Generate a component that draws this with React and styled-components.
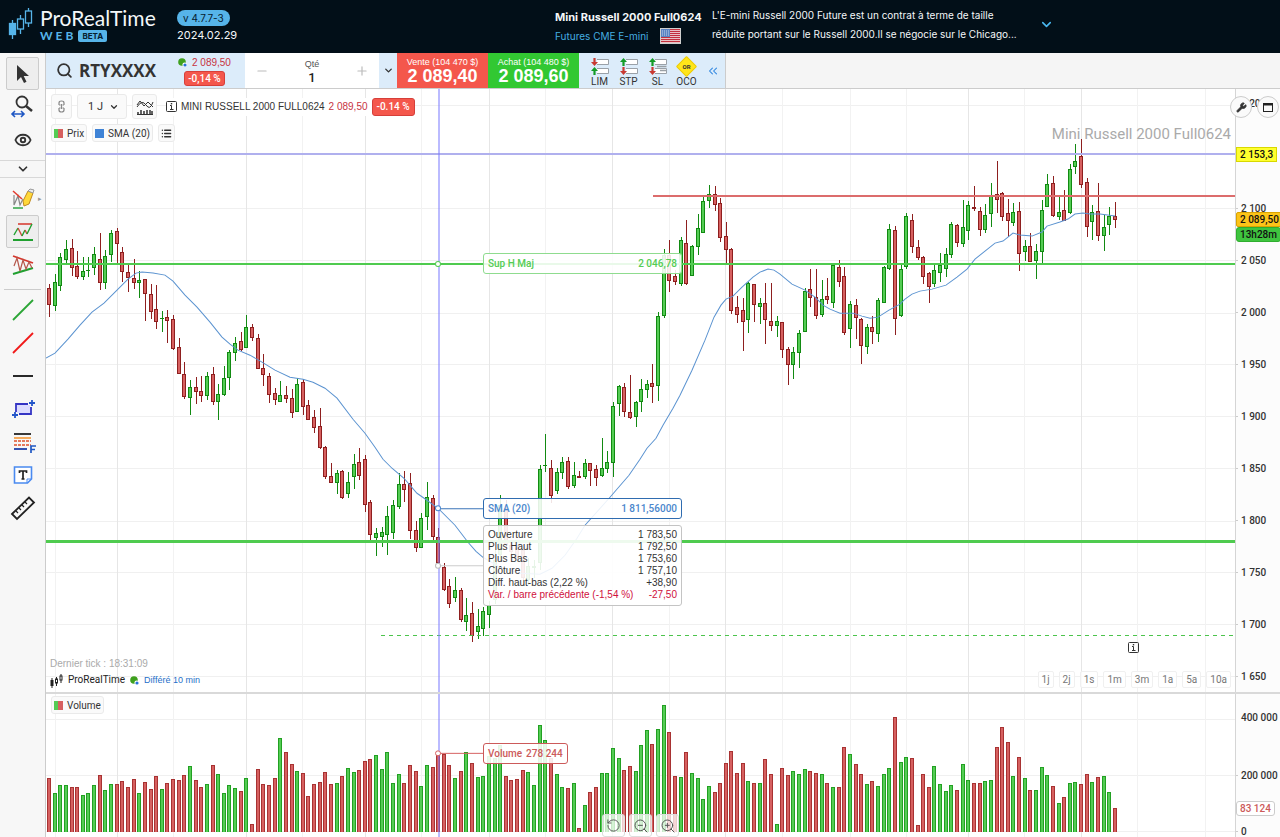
import React from 'react';
import styled, { createGlobalStyle } from 'styled-components';
import { Search, ChevronDown, ChevronsLeft, Eye, Minus, Plus, Wrench, ZoomIn, ZoomOut, RotateCcw, List } from 'lucide-react';

const GREEN = '#54cc54';
const GREEN_DARK = '#128a12';
const RED = '#d66060';
const RED_DARK = '#8e1f1f';

const GlobalStyle = createGlobalStyle`
    * { box-sizing: border-box; }
    body {
        margin: 0;
        background: #fff;
        color: #333;
        font-family: "Liberation Sans", sans-serif;
        font-size: 11px;
    }
    button, input, select {
        font: inherit;
        color: inherit;
        margin: 0;
        padding: 0;
        border: 0;
        background: none;
    }
    svg { display: block; flex-shrink: 0; }
`;

/* [rising, high, body top, body bottom, low, volume top] */
const bars = [
    [0, 284, 288, 305, 317, 778], [1, 274, 282, 306, 311, 793], [1, 253, 257, 286, 291, 785], [1, 240, 249, 260, 263, 785],
    [0, 239, 248, 268, 276, 787], [0, 251, 266, 277, 279, 787], [1, 257, 271, 277, 280, 795], [1, 257, 270, 271, 277, 793],
    [1, 247, 254, 268, 275, 785], [0, 233, 259, 283, 290, 775], [1, 250, 256, 283, 289, 790], [1, 230, 233, 255, 262, 784],
    [0, 228, 231, 244, 263, 784], [0, 247, 252, 272, 282, 781], [0, 264, 272, 278, 292, 787], [0, 259, 278, 283, 289, 779],
    [1, 271, 280, 283, 298, 793], [0, 279, 279, 294, 321, 782], [0, 284, 294, 312, 319, 789], [0, 285, 309, 322, 329, 776],
    [1, 311, 318, 319, 332, 789], [0, 310, 317, 321, 343, 783], [0, 315, 319, 349, 350, 779], [0, 338, 347, 374, 374, 780],
    [0, 362, 374, 397, 399, 775], [1, 380, 387, 398, 415, 766], [0, 377, 387, 392, 404, 780], [0, 376, 391, 396, 402, 787],
    [1, 372, 376, 396, 400, 784], [0, 367, 374, 402, 405, 765], [1, 384, 394, 402, 420, 774], [1, 366, 378, 395, 396, 793],
    [1, 350, 352, 378, 390, 785], [1, 337, 343, 353, 361, 788], [0, 332, 341, 350, 351, 791], [1, 315, 327, 348, 348, 778],
    [0, 324, 327, 338, 341, 824], [0, 334, 338, 369, 369, 769], [0, 354, 368, 375, 386, 784], [0, 373, 376, 395, 403, 785],
    [0, 388, 393, 400, 405, 778], [1, 381, 395, 402, 402, 738], [0, 386, 395, 399, 403, 752], [0, 389, 398, 413, 418, 764],
    [1, 378, 384, 412, 412, 771], [0, 379, 382, 407, 415, 773], [0, 400, 405, 420, 420, 796], [0, 410, 417, 428, 433, 784],
    [0, 408, 426, 448, 449, 782], [0, 446, 447, 477, 479, 772], [0, 463, 476, 483, 483, 784], [1, 470, 473, 483, 494, 783],
    [0, 470, 471, 498, 499, 776], [1, 472, 482, 494, 498, 768], [1, 454, 464, 477, 489, 772], [0, 448, 462, 476, 480, 770],
    [0, 455, 459, 505, 512, 761], [0, 500, 502, 535, 541, 759], [1, 528, 533, 538, 556, 755], [1, 527, 532, 537, 547, 769],
    [1, 506, 516, 535, 555, 752], [1, 500, 505, 533, 539, 783], [1, 473, 484, 507, 509, 774], [0, 471, 484, 490, 502, 783],
    [0, 473, 483, 531, 539, 765], [0, 521, 530, 548, 552, 771], [1, 513, 518, 548, 548, 786], [1, 482, 497, 517, 530, 765],
    [0, 495, 498, 537, 540, 767], [0, 528, 537, 563, 567, 753], [0, 563, 567, 590, 591, 754], [0, 579, 586, 604, 608, 765],
    [1, 577, 590, 598, 602, 778], [0, 588, 590, 620, 622, 771], [1, 598, 615, 622, 631, 752], [0, 602, 613, 636, 642, 763],
    [1, 609, 626, 632, 639, 777], [1, 607, 611, 629, 636, 776], [1, 601, 605, 615, 628, 756], [1, 550, 560, 600, 604, 758],
    [1, 495, 505, 555, 560, 745], [0, 500, 508, 545, 550, 776], [0, 540, 545, 552, 556, 780], [0, 545, 548, 558, 562, 779],
    [0, 545, 550, 578, 585, 770], [1, 558, 566, 580, 585, 772], [1, 560, 566, 568, 578, 785], [1, 465, 469, 563, 570, 725],
    [1, 434, 465, 466, 472, 740], [0, 460, 468, 496, 503, 758], [1, 468, 472, 491, 494, 774], [1, 457, 462, 473, 479, 787],
    [0, 457, 461, 487, 489, 788], [1, 462, 475, 486, 488, 783], [0, 471, 476, 478, 478, 828], [1, 459, 463, 477, 479, 805],
    [0, 463, 463, 471, 486, 792], [0, 465, 469, 478, 486, 787], [1, 438, 468, 476, 477, 773], [1, 451, 462, 469, 473, 773],
    [1, 402, 406, 463, 477, 748], [1, 385, 386, 404, 416, 758], [0, 383, 387, 412, 417, 770], [0, 375, 412, 418, 419, 766],
    [1, 401, 402, 417, 427, 771], [1, 379, 389, 402, 412, 745], [1, 380, 384, 390, 398, 730], [0, 364, 383, 387, 403, 744],
    [1, 312, 316, 386, 401, 729], [1, 249, 255, 316, 318, 705], [0, 240, 255, 281, 292, 732], [0, 270, 276, 282, 285, 776],
    [1, 237, 240, 284, 286, 777], [0, 220, 243, 284, 285, 752], [1, 245, 246, 276, 276, 773], [1, 214, 228, 247, 255, 778],
    [1, 196, 201, 233, 233, 799], [1, 185, 194, 201, 208, 786], [0, 186, 194, 205, 211, 792], [0, 198, 203, 238, 242, 783],
    [0, 222, 236, 250, 263, 763], [0, 248, 249, 311, 314, 751], [0, 296, 307, 315, 323, 773], [0, 298, 310, 322, 351, 763],
    [1, 282, 283, 320, 333, 781], [0, 284, 284, 305, 322, 783], [1, 298, 303, 307, 324, 783], [0, 283, 303, 320, 344, 759],
    [0, 283, 321, 326, 331, 774], [1, 316, 321, 326, 337, 824], [0, 322, 322, 350, 358, 768], [0, 347, 349, 365, 385, 775],
    [1, 347, 352, 365, 379, 771], [1, 330, 333, 353, 368, 774], [1, 288, 291, 332, 332, 769], [0, 269, 289, 298, 307, 771],
    [0, 269, 297, 316, 319, 773], [1, 280, 299, 315, 317, 774], [0, 278, 296, 300, 304, 783], [1, 264, 265, 303, 308, 787],
    [0, 260, 267, 282, 287, 787], [0, 267, 276, 333, 335, 747], [1, 301, 304, 329, 348, 754], [0, 299, 305, 318, 339, 764],
    [0, 318, 319, 346, 364, 774], [1, 324, 327, 347, 354, 784], [0, 316, 327, 332, 344, 781], [1, 298, 300, 334, 342, 786],
    [1, 266, 267, 303, 303, 774], [1, 224, 229, 269, 270, 768], [0, 226, 230, 319, 335, 717], [1, 263, 269, 316, 317, 762],
    [1, 213, 216, 267, 269, 757], [0, 214, 220, 247, 253, 758], [0, 240, 247, 258, 260, 825], [0, 256, 257, 277, 284, 774],
    [0, 272, 273, 287, 303, 787], [1, 264, 270, 284, 287, 766], [1, 253, 265, 273, 282, 784], [1, 248, 254, 269, 277, 791],
    [1, 222, 224, 255, 258, 785], [0, 224, 225, 243, 247, 790], [1, 200, 227, 244, 247, 764], [1, 201, 205, 231, 240, 780],
    [0, 186, 207, 209, 211, 783], [0, 207, 211, 230, 236, 783], [1, 204, 215, 230, 233, 781], [1, 183, 196, 214, 227, 780],
    [0, 161, 194, 200, 213, 747], [0, 192, 193, 217, 221, 727], [0, 199, 213, 221, 237, 742], [1, 203, 212, 223, 226, 776],
    [0, 202, 211, 254, 271, 757], [1, 240, 246, 252, 261, 778], [0, 233, 246, 262, 262, 790], [1, 244, 251, 261, 279, 790],
    [1, 200, 210, 252, 263, 767], [1, 174, 184, 207, 207, 775], [0, 176, 183, 216, 217, 786], [1, 197, 212, 217, 220, 803],
    [0, 190, 210, 221, 221, 797], [1, 164, 169, 213, 214, 783], [1, 144, 161, 167, 174, 782], [0, 139, 156, 185, 188, 784],
    [0, 178, 182, 227, 237, 774], [1, 205, 212, 222, 240, 782], [0, 183, 211, 236, 241, 777], [1, 215, 227, 236, 251, 776],
    [1, 207, 216, 225, 235, 792], [0, 202, 216, 220, 228, 808],
];

const sma = '46,358 55,353 68,339 80,325 92,312 104,303 116,291 128,279 136,273 142,272 153,273 165,275 173,281 185,295 197,307 210,322 222,337 230,344 238,350 250,355 262,362 275,370 290,377 303,379 313,382 325,388 337,398 353,419 365,433 375,447 383,459 392,468 404,478 417,493 427,500 438,508 455,525 468,542 476,551 483,557 500,567 520,573 540,574 552,568 565,555 577,538 585,525 610,497 629,475 640,459 647,448 656,438 663,425 673,408 680,395 692,370 705,340 714,317 721,305 726,299 733,296 742,287 753,277 760,272 768,269 774,270 780,274 792,284 805,290 815,297 823,305 830,309 840,313 853,313 862,316 870,318 878,317 889,310 900,304 905,299 912,294 920,291 932,289 946,285 957,277 967,269 975,259 985,251 995,243 1003,241 1013,233 1020,235 1032,236 1042,232 1047,226 1060,222 1068,219 1075,214 1083,213 1090,214 1100,214 1115,216';

const gridX = [55, 117, 173, 246, 302, 365, 421, 489, 545, 612, 669, 725, 782, 850, 906, 968, 1024, 1081, 1137, 1205];
const gridStrong = [117, 246, 365, 489, 612, 725, 968, 1081];
const priceGrid = [105, 208, 260, 313, 364, 416, 468, 521, 572, 624, 676];
const volumeGrid = [719, 775, 831];
// the 2 150 label makes room for the alert tag
const prices = ['', '2 100', '2 050', '2 000', '1 950', '1 900', '1 850', '1 800', '1 750', '1 700', '1 650'];

const barX = (i) => Math.round(49 + 5.64 * i);

const Page = styled.div`
    display: flex;
    flex-direction: column;
    height: 100vh;
    overflow: hidden;
`

const Header = styled.header`
    display: flex;
    align-items: center;
    height: 53px;
    flex-shrink: 0;
    background: #020f18;
    color: #f4f7f9;
    font-family: Inter, sans-serif;
`

const Brand = styled.div`
    display: flex;
    align-items: center;
    width: 177px;
    padding: 0 0 6px 8px;
    gap: 6px;
`

const BrandName = styled.div`
    font-family: Lato, sans-serif;
    font-size: 21px;
    line-height: 25px;
`

const BrandSub = styled.div`
    display: flex;
    align-items: center;
    gap: 2px;
    color: #56b4e9;
    font-family: Lato, sans-serif;
    font-size: 12px;
    font-weight: 700;
    line-height: 12px;
    letter-spacing: 3px;
`

const Beta = styled.span`
    padding: 0 4px;
    border-radius: 2px;
    background: #56b4e9;
    color: #06202f;
    font-family: Inter, sans-serif;
    font-size: 8px;
    letter-spacing: 0;
`

const Version = styled.div`
    display: flex;
    flex-direction: column;
    align-items: flex-start;
    width: 378px;
    font-size: 11px;
    line-height: 18px;
`

const VersionTag = styled.span`
    padding: 0 6px;
    border-radius: 8px;
    background: #56b4e9;
    color: #06202f;
    font-size: 10px;
    line-height: 16px;
`

const Instrument = styled.div`
    width: 157px;
    line-height: 19px;
    white-space: nowrap;
`

const InstrumentName = styled.div`
    font-family: Inter, sans-serif;
    font-size: 11px;
    font-weight: 700;
`

const Market = styled.div`
    display: flex;
    align-items: center;
    gap: 12px;
    color: #45aee0;
    font-size: 10px;
`

const Description = styled.p`
    width: 327px;
    margin: 0 0 4px;
    font-size: 10px;
    line-height: 19px;
    white-space: nowrap;
`

const HeaderToggle = styled.button`
    display: flex;
    padding-bottom: 4px;
    color: #4ab8f0;
`

const Body = styled.div`
    display: flex;
    flex: 1;
    min-height: 0;
`

const Sidebar = styled.nav`
    display: flex;
    flex-direction: column;
    align-items: center;
    width: 46px;
    flex-shrink: 0;
    padding-top: 4px;
    border-right: 1px solid #ccc;
    background: #f7f7f7;
`

const Tool = styled.button`
    position: relative;
    display: flex;
    align-items: center;
    justify-content: center;
    width: 33px;
    height: 33px;
    flex-shrink: 0;
    border: 1px solid ${props => props.$active ? '#ccc' : 'transparent'};
    border-radius: 2px;
    background: ${props => props.$active ? '#eee' : 'transparent'};
`

const MoreTools = styled.button`
    display: flex;
    align-items: center;
    justify-content: center;
    width: 100%;
    height: 18px;
    margin: 4px 0;
    border-top: 1px solid #d8d8d8;
    border-bottom: 1px solid #d8d8d8;
`

const Flyout = styled.span`
    position: absolute;
    right: -4px;
    color: #999;
    font-size: 7px;
`

const Separator = styled.hr`
    width: 37px;
    margin: 8px 0 3px;
    border: 0;
    border-top: 1px solid #ccc;
`

const Main = styled.main`
    display: flex;
    flex-direction: column;
    flex: 1;
    min-width: 0;
`

const Toolbar = styled.div`
    display: flex;
    height: 36px;
    flex-shrink: 0;
    border-bottom: 1px solid #ccc;
    background: #f5f5f5;
`

const SymbolBox = styled.label`
    display: flex;
    align-items: center;
    gap: 6px;
    width: 199px;
    padding: 0 12px 0 10px;
    background: #dcecfa;
`

const SymbolInput = styled.input`
    width: 93px;
    font-family: "Open Sans", sans-serif;
    font-size: 17px;
    font-weight: 700;
    outline: none;
`

const QuoteBox = styled.div`
    display: flex;
    flex-direction: column;
    align-items: center;
    gap: 1px;
    color: #c7333f;
    font-size: 10px;
    line-height: 14px;
`

const QuoteLine = styled.div`
    display: flex;
    align-items: center;
    gap: 5px;
    white-space: nowrap;
`

const Change = styled.span`
    padding: 0 ${props => props.$large ? 4 : 3}px;
    border: 1px solid #d63f3a;
    border-radius: 3px;
    background: #f4574c;
    color: #fff;
    font-family: Roboto, sans-serif;
    font-size: 10px;
    font-weight: 500;
    line-height: ${props => props.$large ? 16 : 13}px;
    white-space: nowrap;
`

const Quantity = styled.div`
    display: flex;
    align-items: center;
    justify-content: space-between;
    width: 134px;
    padding: 0 10px;
    background: #fff;
    color: #bbb;
`

const QuantityField = styled.label`
    display: flex;
    flex-direction: column;
    align-items: center;
    color: #555;
    font-size: 9px;
    line-height: 14px;
`

const QuantityInput = styled.input`
    width: 60px;
    color: #222;
    font-family: Roboto, sans-serif;
    font-size: 13px;
    font-weight: 500;
    text-align: center;
    outline: none;
`

const DropButton = styled.button`
    display: flex;
    align-items: center;
    justify-content: center;
    width: 18px;
    background: #dcecfa;
`

const OrderButton = styled.button`
    width: 91px;
    background: ${props => props.$buy ? '#32c832' : '#f4574c'};
    color: #fff;
    font-size: 9px;
    line-height: 12px;
    white-space: nowrap;
`

const OrderPrice = styled.span`
    display: block;
    font-size: 18px;
    font-weight: 700;
    line-height: 17px;
`

const OrderTypes = styled.div`
    display: flex;
    align-items: center;
    width: 147px;
    padding-left: 6px;
    border-right: 1px solid #ccc;
    background: #dcecfa;
`

const OrderType = styled.button`
    display: flex;
    flex-direction: column;
    align-items: center;
    justify-content: flex-end;
    width: 29px;
    height: 34px;
    font-family: Roboto, sans-serif;
    font-size: 10px;
    line-height: 12px;
`

const Collapse = styled.button`
    display: flex;
    margin-left: 5px;
    color: #2f86e0;
`

const Pane = styled.section`
    display: flex;
    flex: ${props => props.$grow} 0 0;
    min-height: 0;
    border-bottom: ${props => props.$last ? '0' : '2px solid #d9d9d9'};
`

const Plot = styled.div`
    position: relative;
    flex: 1;
    min-width: 0;
`

const Drawing = styled.svg`
    width: 100%;
    height: 100%;
`

const Axis = styled.div`
    position: relative;
    width: 45px;
    flex-shrink: 0;
    border-left: 1px solid #d5d5d5;
    background: #fcfcfc;
    font-family: Roboto, sans-serif;
    font-size: 10px;
    font-weight: 500;
    white-space: nowrap;
`

const TopTick = styled.div`
    height: ${props => props.$height}px;
    padding-left: 5px;
    line-height: ${props => props.$line}px;
`

const Tick = styled.div`
    display: flex;
    align-items: center;
    height: ${props => props.$height}px;

    &:before {
        content: '';
        width: 2px;
        margin-right: 3px;
        border-top: 1px solid #ccc;
    }
`

const PriceTag = styled.div`
    position: absolute;
    left: 0;
    top: ${props => props.$top}px;
    height: 15px;
    padding: 0 3px;
    border: 1px solid ${props => props.$border};
    border-radius: ${props => props.$round || 0}px;
    background: ${props => props.$fill};
    color: ${props => props.$ink || '#111'};
    line-height: 13px;
`

const WindowButtons = styled.div`
    position: absolute;
    top: 7px;
    right: 1px;
    display: flex;
    gap: 5px;
`

const RoundButton = styled.button`
    display: flex;
    align-items: center;
    justify-content: center;
    width: 22px;
    height: 22px;
    border: 1px solid #ccc;
    border-radius: 50%;
    background: #fafafa;
`

const ChartHead = styled.div`
    position: absolute;
    top: 5px;
    left: 5px;
    display: flex;
    flex-direction: column;
    gap: 5px;
`

const HeadRow = styled.div`
    display: flex;
    align-items: center;
    gap: ${props => props.$gap}px;
`

const HeadButton = styled.button`
    display: flex;
    align-items: center;
    justify-content: center;
    width: ${props => props.$width}px;
    height: 25px;
    border: 1px solid #eaeaea;
    border-radius: 3px;
    background: #fafafa;
`

const Timeframe = styled.label`
    position: relative;
    display: flex;
    align-items: center;
    width: 50px;
    height: 25px;
    padding-left: 10px;
    border: 1px solid #eaeaea;
    border-radius: 3px;
    background: #fafafa;

    select {
        width: 21px;
        appearance: none;
        font-family: Roboto, sans-serif;
        outline: none;
    }
`

const Title = styled.div`
    display: flex;
    align-items: center;
    gap: 4px;
    margin-left: 4px;
    background: #fff;
    font-size: 10px;
    white-space: nowrap;
`

const Legend = styled.button`
    display: flex;
    align-items: center;
    gap: 4px;
    height: 18px;
    padding: 0 2px;
    border: 1px solid #eaeaea;
    border-radius: 3px;
    background: #fafafa;
    font-family: Roboto, sans-serif;
    font-size: 10px;
`

const Swatch = styled.span`
    width: 9px;
    height: 9px;
    background: ${props => props.$right
        ? `linear-gradient(90deg, ${props.$left} 50%, ${props.$right} 50%)`
        : props.$left};
`

const Watermark = styled.div`
    position: absolute;
    top: 36px;
    right: 4px;
    color: #aaa;
    font-family: Roboto, sans-serif;
    font-size: 15px;
    line-height: 18px;
`

const Callout = styled.div`
    position: absolute;
    left: 437px;
    top: ${props => props.$top}px;
    display: flex;
    align-items: center;
    justify-content: space-between;
    gap: 4px;
    width: ${props => props.$wide ? '199px' : 'auto'};
    height: 21px;
    padding: 0 4px;
    border: 1px solid ${props => props.$line || props.$color};
    border-radius: 3px;
    background: rgba(255, 255, 255, 0.88);
    color: ${props => props.$color};
    font-family: Roboto, sans-serif;
    font-size: 10px;
    font-weight: 500;
    white-space: nowrap;
`

const Details = styled.table`
    position: absolute;
    left: 437px;
    top: 436px;
    width: 199px;
    padding: 3px 4px 4px;
    border: 1px solid #c4c4c4;
    border-radius: 3px;
    border-spacing: 0;
    background: rgba(255, 255, 255, 0.9);
    color: #333;
    font-size: 10px;
    line-height: 12px;

    th, td {
        padding: 0;
        font-weight: 400;
        text-align: left;
        white-space: nowrap;
    }
    td { text-align: right; }
    tr:last-child { color: #d0103c; }
`

const ChartFoot = styled.div`
    position: absolute;
    left: 4px;
    bottom: 4px;
    color: #1f6fc9;
    font-size: 9px;
    line-height: 16px;
`

const LastTick = styled.div`
    color: #aaa;
    font-size: 10px;
`

const FootBrand = styled.span`
    color: #222;
    font-family: Roboto, sans-serif;
    font-size: 10px;
`

const Ranges = styled.div`
    position: absolute;
    right: 4px;
    bottom: 4px;
    display: flex;
    gap: 5px;
`

const Range = styled.button`
    height: 17px;
    padding: 0 3px;
    border: 1px solid #f0f0f0;
    border-radius: 2px;
    background: rgba(255, 255, 255, 0.8);
    color: #777;
    font-family: Roboto, sans-serif;
    font-size: 10px;
`

const NewsMark = styled.button`
    position: absolute;
    left: 1082px;
    top: 553px;
`

const VolumeLegend = styled.div`
    position: absolute;
    top: 2px;
    left: 5px;
`

const ZoomBar = styled.div`
    position: absolute;
    left: 0;
    right: 0;
    bottom: 0;
    display: flex;
    justify-content: center;
    gap: 4px;
`

const ZoomButton = styled.button`
    display: flex;
    align-items: center;
    justify-content: center;
    width: 23px;
    height: 23px;
    border: 1px solid #ddd;
    border-radius: 3px;
    background: rgba(255, 255, 255, 0.75);
    color: #555;
`

function LogoCandles() {
    return (
        <svg width="26" height="33" viewBox="0 0 26 33" fill="none" stroke="#56b4e9" strokeWidth="1.3">
            <path d="M4.5 13v4M4.5 27v5M12.5 8v4M12.5 22v5M20.500 1v3M20.500 16v4" />
            <rect x="1.500" y="16.500" width="6" height="11" fill="#56b4e9" />
            <rect x="9.500" y="12" width="6" height="10" />
            <rect x="17.500" y="4" width="6" height="12" />
        </svg>
    )
}

function SmallCandles() {
    return (
        <svg width="13" height="15" viewBox="0 0 13 15" fill="none" stroke="#222">
            <path d="M2 5v10M6.500 4v2M6.500 10v3M11 1v2M11 7v3" />
            <rect x=".5" y="7" width="3" height="6" fill="#222" stroke="none" />
            <rect x="5.500" y="6" width="2" height="4" />
            <rect x="10" y="3" width="2" height="4" />
        </svg>
    )
}

function Flag() {
    return (
        <svg width="21" height="16" viewBox="0 0 21 16">
            <rect width="21" height="16" fill="#f3e6e6" />
            {[1, 3, 5, 7, 9, 11, 13].map(y => <rect key={y} x="1" y={y} width="19" height="1.200" fill="#c22f3c" />)}
            <rect x="1" y="1" width="9" height="8" fill="#5a82c2" />
            <path d="M2 3h7M2 5h7M2 7h7" stroke="#dfe8f5" strokeWidth=".8" strokeDasharray="1 1" />
            <rect x=".5" y=".5" width="20" height="15" fill="none" stroke="#cfcfcf" />
        </svg>
    )
}

function StatusDot() {
    return (
        <svg width="9" height="9" viewBox="0 0 9 9">
            <circle cx="4" cy="4" r="3.800" fill="#3fa01e" />
            <circle cx="6.700" cy="6.700" r="2.300" fill="#fff" />
            <circle cx="7" cy="7" r="1.600" fill="#2570d8" />
        </svg>
    )
}

function InfoIcon({ size = 11 }) {
    return (
        <svg width={size} height={size} viewBox="0 0 11 11" fill="none" stroke="#333">
            <rect x=".5" y=".5" width="10" height="10" rx="1" />
            <path d="M4 4.500h1.500v4M4 8.500h3.500" />
            <rect x="4.800" y="2" width="1.400" height="1.400" fill="#333" stroke="none" />
        </svg>
    )
}

function OrderIcon({ type }) {
    const down = '#c93a32';
    const up = '#149c27';
    const top = type === 'LIM' ? down : up;
    const bottom = type === 'LIM' ? up : down;
    const topArrow = type === 'LIM' ? 'M3.500 8L0 4h2.400V0h2.200v4H7z' : 'M3.500 0L0 4h2.400v4h2.200V4H7z';
    const bottomArrow = type === 'LIM' ? 'M3.500 9L0 13h2.400v4h2.200v-4H7z' : 'M3.500 17L0 13h2.400V9h2.200v4H7z';
    return (
        <svg width="18" height="18" viewBox="0 0 18 18">
            <path d="M6 1.500h11.500v5H6M6 10.500h11.500v5H6" fill="#fff" stroke="#9aa1a8" />
            {type === 'SL' && <path d="M8 8.500h9.500M11 12.500h6" stroke="#9aa0a5" strokeWidth="1.500" />}
            <path d={topArrow} fill={top} />
            <path d={bottomArrow} fill={bottom} />
        </svg>
    )
}

const OrBadge = styled.span`
    position: relative;
    display: flex;
    align-items: center;
    justify-content: center;
    width: 18px;
    height: 18px;
    font-size: 6px;
    font-weight: 700;

    &:before {
        content: '';
        position: absolute;
        width: 13px;
        height: 13px;
        border-radius: 1px;
        background: #ffe51a;
        border: 1px solid #eccb00;
        transform: rotate(45deg);
    }
    span { position: relative; }
`

const toolIcons = {
    pointer: <path d="M8 3v16l4-4 3 6 2.500-1.200L14.700 14H20z" transform="translate(-2 0)" fill="#333" />,
    zoom: (
        <g fill="none">
            <circle cx="11" cy="7" r="5.500" stroke="#333" strokeWidth="1.800" />
            <path d="M15 11l6 5" stroke="#333" strokeWidth="2.500" />
            <path d="M1 19h12M4 16l-3 3 3 3M10 16l3 3-3 3" stroke="#1f57c4" strokeWidth="1.600" />
        </g>
    ),
    draw: (
        <g fill="none">
            <path d="M3 8v10l4-9 2 9 3-6" stroke="#888" strokeWidth="1.200" />
            <path d="M2 4l9 8" stroke="#e23b2e" strokeWidth="1.500" />
            <path d="M2 21h10" stroke="#2fa544" strokeWidth="1.500" />
            <path d="M17 4l5 2-4 11-5 2-1-5z" fill="#ffd83a" stroke="#c08a20" />
            <path d="M17 4l5 2 1-3-4-1z" fill="#eee" stroke="#999" />
        </g>
    ),
    range: (
        <g fill="none">
            <path d="M7 4h14" stroke="#d5342a" strokeWidth="1.500" />
            <path d="M2 20h20" stroke="#20a030" strokeWidth="2" />
            <path d="M3 15l4-7" stroke="#20a030" strokeWidth="1.400" />
            <path d="M7 8l4 8" stroke="#c94a3c" strokeWidth="1.400" />
            <path d="M11 16l3-6" stroke="#20a030" strokeWidth="1.400" />
            <path d="M14 10l2 4" stroke="#c94a3c" strokeWidth="1.400" />
            <path d="M16 14l5-10" stroke="#20a030" strokeWidth="1.400" />
        </g>
    ),
    triangle: (
        <g fill="none">
            <path d="M2 3l20 7" stroke="#d5342a" strokeWidth="1.800" />
            <path d="M2 21l20-6" stroke="#20a030" strokeWidth="2" />
            <path d="M3 13l3-8 3 13 3-11 3 9 3-7 3 6" stroke="#b5564a" strokeWidth="1.200" />
        </g>
    ),
    up: <path d="M2 22L22 2" stroke="#2aa535" strokeWidth="1.800" />,
    down: <path d="M2 22L22 2" stroke="#f01818" strokeWidth="1.800" />,
    line: <path d="M2 12h20" stroke="#111" strokeWidth="1.800" />,
    rect: (
        <g>
            <path d="M5 15V7h12M20 10v7H8" fill="none" stroke="#3434c4" strokeWidth="1.800" />
            <rect x="6" y="8" width="13" height="8" fill="#dcdcff" />
            <path d="M1 18h6M4 15v6M18 6h6M21 3v6" stroke="#2456c9" strokeWidth="1.800" />
        </g>
    ),
    fibo: (
        <g fill="none">
            <path d="M3 4h17" stroke="#222" strokeWidth="1.800" />
            <path d="M3 8h17" stroke="#f5a24a" strokeWidth="1.800" />
            <path d="M3 11h17M3 15h17" stroke="#e0512b" strokeWidth="1.500" strokeDasharray="3 1" />
            <path d="M3 19h13" stroke="#1d3fa8" strokeWidth="1.800" />
            <path d="M20 23v-7h5M20 19.500h4" stroke="#1f57c4" strokeWidth="1.700" />
        </g>
    ),
    text: (
        <g>
            <path d="M3.500 4h17v12l-4 4h-13z" fill="#fff" stroke="#4a8af0" strokeWidth="1.600" />
            <path d="M16 20v-4h4" fill="none" stroke="#4a8af0" />
            <path d="M8.500 10V8h7v2M12 8v8M10.500 16h3" fill="none" stroke="#222" strokeWidth="1.700" />
        </g>
    ),
    ruler: (
        <g fill="none" stroke="#222" strokeWidth="1.800">
            <path d="M1 18L18 1.500l5 5L6 23z" />
            <path d="M5 15l2 2M8 12l2 2M11 9l2 2M14 6l2 2" strokeWidth="1.200" />
        </g>
    ),
};

function ToolButton({ name, label, active, children }) {
    return (
        <Tool type="button" aria-label={label} $active={active}>
            <svg width="24" height="24" viewBox="0 0 24 24" overflow="visible">{toolIcons[name]}</svg>
            {children}
        </Tool>
    )
}

function Grid({ top, bottom, rows }) {
    return (
        <g>
            {rows.map(y => <rect key={y} x="46" y={y} width="1189" height="1" fill="#f0f0f0" />)}
            {gridX.map(x => (
                <rect key={x} x={x} y={top} width="1" height={bottom - top} fill={gridStrong.includes(x) ? '#e6e6e6' : '#f2f2f2'} />
            ))}
        </g>
    )
}

function Candle({ x, bar }) {
    const [rising, high, top, bottom, low] = bar;
    const dark = rising ? GREEN_DARK : RED_DARK;
    const height = Math.max(bottom - top, 1);
    return (
        <g>
            <rect x={x} y={high} width="1" height={low - high} fill={dark} />
            <rect x={x - 2} y={top} width="4" height={height} fill={dark} />
            {height > 2 && <rect x={x - 1} y={top + 1} width="2" height={height - 2} fill={rising ? GREEN : RED} />}
        </g>
    )
}

function PriceChart() {
    return (
        <Drawing viewBox="46 89 1189 603" preserveAspectRatio="none" shapeRendering="crispEdges">
            <Grid top={89} bottom={692} rows={priceGrid} />
            {bars.map((bar, i) => <Candle key={i} x={barX(i)} bar={bar} />)}
            <polyline points={sma} fill="none" stroke="#5b93d0" shapeRendering="auto" />
            <rect x="46" y="153" width="1189" height="2" fill="#b0b0ee" />
            <rect x="653" y="195" width="582" height="2" fill="#dc6c6c" />
            <rect x="46" y="263" width="1189" height="2" fill="#4fcb4f" />
            <rect x="46" y="540" width="1189" height="3" fill="#4fcb4f" />
            <path d="M381 635.500H1235" stroke="#4cc44c" strokeDasharray="4 4" />
            <rect x="438" y="89" width="2" height="603" fill="#7777ff" opacity=".5" />
            <g fill="#fff" shapeRendering="auto">
                <path d="M440 508.500h43" stroke="#3b74b8" />
                <path d="M440 565.500h43" stroke="#ccc" />
                <circle cx="438" cy="264" r="2.500" stroke={GREEN} />
                <circle cx="438" cy="508" r="2.500" stroke="#4a86cc" />
                <circle cx="438" cy="565.500" r="2.500" stroke="#bbb" />
            </g>
        </Drawing>
    )
}

function VolumeChart() {
    return (
        <Drawing viewBox="46 694 1189 143" preserveAspectRatio="none" shapeRendering="crispEdges">
            <Grid top={694} bottom={837} rows={volumeGrid} />
            {bars.map((bar, i) => {
                const x = barX(i);
                const y = bar[5];
                return (
                    <g key={i}>
                        <rect x={x - 2} y={y} width="4" height={832 - y} fill={bar[0] ? '#22a022' : '#a83232'} />
                        <rect x={x - 1} y={y + 1} width="2" height={831 - y} fill={bar[0] ? GREEN : RED} />
                    </g>
                )
            })}
            <rect x="438" y="694" width="2" height="143" fill="#7777ff" opacity=".5" />
            <path d="M440 753.500h43" stroke={RED} />
            <circle cx="438" cy="753.500" r="2.500" fill="#fff" stroke={RED} shapeRendering="auto" />
        </Drawing>
    )
}

const details = [
    ['Ouverture', '1 783,50'],
    ['Plus Haut', '1 792,50'],
    ['Plus Bas', '1 753,60'],
    ['Clôture', '1 757,10'],
    ['Diff. haut-bas (2,22 %)', '+38,90'],
    ['Var. / barre précédente (-1,54 %)', '-27,50'],
];

function TopHeader() {
    return (
        <Header>
            <Brand>
                <LogoCandles />
                <div>
                    <BrandName>ProRealTime</BrandName>
                    <BrandSub>WEB <Beta>BETA</Beta></BrandSub>
                </div>
            </Brand>
            <Version>
                <VersionTag>v 4.7.7-3</VersionTag>
                2024.02.29
            </Version>
            <Instrument>
                <InstrumentName>Mini Russell 2000 Full0624</InstrumentName>
                <Market>Futures CME E-mini <Flag /></Market>
            </Instrument>
            <Description>
                L'E-mini Russell 2000 Future est un contrat à terme de taille<br />
                réduite portant sur le Russell 2000.Il se négocie sur le Chicago...
            </Description>
            <HeaderToggle type="button" aria-label="Description"><ChevronDown size={15} strokeWidth={2.5} /></HeaderToggle>
        </Header>
    )
}

function SideTools() {
    return (
        <Sidebar>
            <ToolButton name="pointer" label="Pointeur" active />
            <ToolButton name="zoom" label="Zoom" />
            <Tool type="button" aria-label="Affichage"><Eye size={18} strokeWidth={2.500} /></Tool>
            <MoreTools type="button" aria-label="Plus d'outils"><ChevronDown size={14} strokeWidth={3} /></MoreTools>
            <ToolButton name="draw" label="Dessin"><Flyout>▸</Flyout></ToolButton>
            <ToolButton name="range" label="Supports" active />
            <ToolButton name="triangle" label="Figures" />
            <Separator />
            <ToolButton name="up" label="Ligne verte" />
            <ToolButton name="down" label="Ligne rouge" />
            <ToolButton name="line" label="Ligne horizontale" />
            <ToolButton name="rect" label="Rectangle" />
            <ToolButton name="fibo" label="Fibonacci" />
            <ToolButton name="text" label="Texte" />
            <ToolButton name="ruler" label="Règle" />
        </Sidebar>
    )
}

function TradingBar() {
    return (
        <Toolbar>
            <SymbolBox>
                <Search size={17} strokeWidth={2.500} />
                <SymbolInput aria-label="Symbole" defaultValue="RTYXXXX" />
                <QuoteBox>
                    <QuoteLine><StatusDot />2 089,50</QuoteLine>
                    <Change>-0,14 %</Change>
                </QuoteBox>
            </SymbolBox>
            <Quantity>
                <button type="button" aria-label="Moins"><Minus size={14} /></button>
                <QuantityField>Qté<QuantityInput defaultValue="1" /></QuantityField>
                <button type="button" aria-label="Plus"><Plus size={14} /></button>
            </Quantity>
            <DropButton type="button" aria-label="Quantités"><ChevronDown size={11} strokeWidth={3} /></DropButton>
            <OrderButton type="button">Vente (104 470 $)<OrderPrice>2 089,40</OrderPrice></OrderButton>
            <OrderButton type="button" $buy>Achat (104 480 $)<OrderPrice>2 089,60</OrderPrice></OrderButton>
            <OrderTypes>
                {['LIM', 'STP', 'SL'].map(type => (
                    <OrderType key={type} type="button"><OrderIcon type={type} />{type}</OrderType>
                ))}
                <OrderType type="button"><OrBadge><span>OR</span></OrBadge>OCO</OrderType>
                <Collapse type="button" aria-label="Réduire"><ChevronsLeft size={14} strokeWidth={1.8} /></Collapse>
            </OrderTypes>
        </Toolbar>
    )
}

function PricePane() {
    return (
        <Pane $grow={605}>
            <Plot>
                <PriceChart />
                <Watermark>Mini Russell 2000 Full0624</Watermark>
                <ChartHead>
                    <HeadRow $gap={5}>
                        <HeadButton type="button" aria-label="Lier" $width={21}>
                            <svg width="9" height="13" viewBox="0 0 9 13" fill="none" stroke="#888" strokeWidth="1.200">
                                <path d="M2 5V3q0-2 2.500-2T7 3v2M2 8v2q0 2 2.500 2T7 10V8M2 5h1.500M7 5H5.500M2 8h1.500M7 8H5.500M4.500 4v5" />
                            </svg>
                        </HeadButton>
                        <Timeframe>
                            <select aria-label="Unité de temps" defaultValue="1 J"><option>1 J</option></select>
                            <ChevronDown size={10} strokeWidth={3} />
                        </Timeframe>
                        <HeadButton type="button" aria-label="Indicateurs" $width={25}>
                            <svg width="18" height="16" viewBox="0 0 18 16" fill="none" stroke="#333">
                                <path d="M1 6l3-4 4 5 4-4 5 5M1 8q5-8 9-2t7-3" />
                                <path d="M2 15v-2M5 15v-4M8 15v-3M11 15v-4M14 15v-4M16 15v-3" strokeWidth="1.500" />
                                <path d="M1 15.500h16" />
                            </svg>
                        </HeadButton>
                        <Title>
                            <InfoIcon />
                            MINI RUSSELL 2000 FULL0624
                            <QuoteBox>2 089,50</QuoteBox>
                            <Change $large>-0.14 %</Change>
                        </Title>
                    </HeadRow>
                    <HeadRow $gap={5}>
                        <Legend type="button"><Swatch $left={GREEN} $right={RED} />Prix</Legend>
                        <Legend type="button"><Swatch $left="#3f83d6" />SMA (20)</Legend>
                        <Legend type="button" aria-label="Liste"><List size={11} strokeWidth={3} /></Legend>
                    </HeadRow>
                </ChartHead>
                <Callout $top={164} $wide $color={GREEN} $line="#8fdc8f"><span>Sup H Maj</span><span>2 046,78</span></Callout>
                <Callout $top={409} $wide $color="#4a86cc" $line="#2f6cb0"><span>SMA (20)</span><span>1 811,56000</span></Callout>
                <Details>
                    <tbody>
                        {details.map(([name, value]) => <tr key={name}><th scope="row">{name}</th><td>{value}</td></tr>)}
                    </tbody>
                </Details>
                <NewsMark type="button" aria-label="Information"><InfoIcon /></NewsMark>
                <ChartFoot>
                    <LastTick>Dernier tick : 18:31:09</LastTick>
                    <QuoteLine>
                        <SmallCandles />
                        <FootBrand>ProRealTime</FootBrand>
                        <StatusDot />
                        Différé 10 min
                    </QuoteLine>
                </ChartFoot>
                <Ranges>
                    {['1j', '2j', '1s', '1m', '3m', '1a', '5a', '10a'].map(r => <Range key={r} type="button">{r}</Range>)}
                </Ranges>
            </Plot>
            <Axis>
                <TopTick $height={41} $line={30}>2 200</TopTick>
                {prices.map((price, i) => <Tick key={i} $height={52}>{price}</Tick>)}
                <PriceTag $top={58} $fill="#ffff2e" $border="#d8d800">2 153,3</PriceTag>
                <PriceTag $top={123} $fill="#fcc419" $border="#dba400" $round={2}>2 089,50</PriceTag>
                <PriceTag $top={138} $fill="#3fc43f" $border="#2fae2f" $round={3}>13h28m</PriceTag>
                <WindowButtons>
                    <RoundButton type="button" aria-label="Réglages"><Wrench size={11} fill="#333" /></RoundButton>
                    <RoundButton type="button" aria-label="Fenêtre">
                        <svg width="10" height="9" viewBox="0 0 10 9" fill="none" stroke="#222">
                            <rect x=".5" y=".5" width="9" height="8" />
                            <path d="M0 1.500h10" strokeWidth="2" />
                        </svg>
                    </RoundButton>
                </WindowButtons>
            </Axis>
        </Pane>
    )
}

function VolumePane() {
    return (
        <Pane $grow={143} $last>
            <Plot>
                <VolumeChart />
                <VolumeLegend>
                    <Legend type="button"><Swatch $left={GREEN} $right={RED} />Volume</Legend>
                </VolumeLegend>
                <Callout $top={49} $color="#cc5a5a"><span>Volume</span><span>278 244</span></Callout>
                <ZoomBar>
                    <ZoomButton type="button" aria-label="Réinitialiser"><RotateCcw size={15} strokeWidth={1.5} /></ZoomButton>
                    <ZoomButton type="button" aria-label="Zoom arrière"><ZoomOut size={16} strokeWidth={1.5} /></ZoomButton>
                    <ZoomButton type="button" aria-label="Zoom avant"><ZoomIn size={16} strokeWidth={1.5} /></ZoomButton>
                </ZoomBar>
            </Plot>
            <Axis>
                <TopTick $height={53} $line={48}>400 000</TopTick>
                <Tick $height={56}>200 000</Tick>
                <Tick $height={56}>0</Tick>
                <PriceTag $top={107} $fill="#fff" $border="#ccc" $round={3} $ink="#cc5a5a">83 124</PriceTag>
            </Axis>
        </Pane>
    )
}

export default function App() {
    return (
        <React.Fragment>
            <GlobalStyle />
            <Page>
                <TopHeader />
                <Body>
                    <SideTools />
                    <Main>
                        <TradingBar />
                        <PricePane />
                        <VolumePane />
                    </Main>
                </Body>
            </Page>
        </React.Fragment>
    )
}
